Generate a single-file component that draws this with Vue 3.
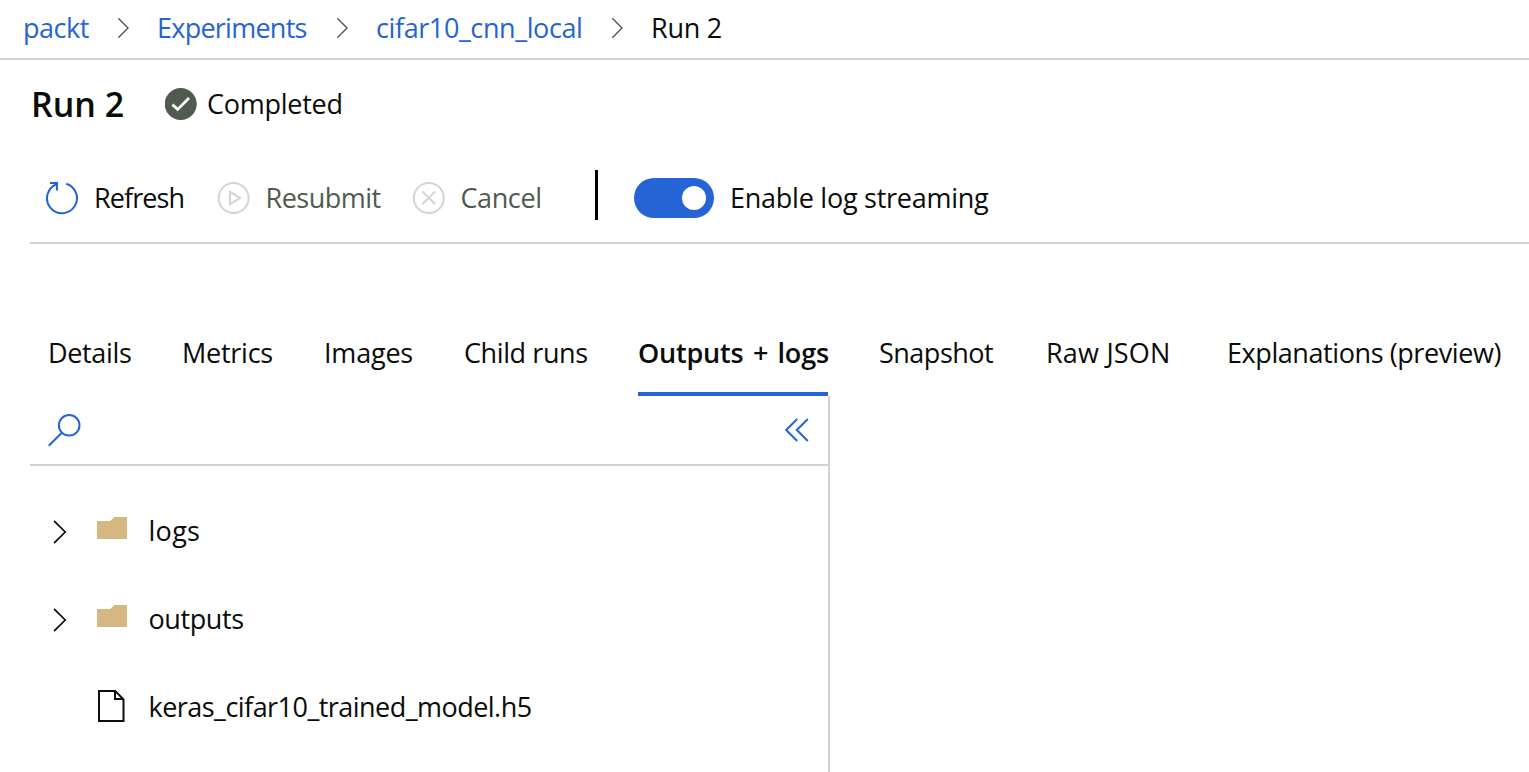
<script setup>
import { ref } from 'vue'

const crumbs = [
  { text: 'packt', cls: 'c-packt' },
  { text: 'Experiments', cls: 'c-exp' },
  { text: 'cifar10_cnn_local', cls: 'c-cifar' },
]

const tabs = [
  { text: 'Details', cls: 't-details' },
  { text: 'Metrics', cls: 't-metrics' },
  { text: 'Images', cls: 't-images' },
  { text: 'Child runs', cls: 't-child' },
  { text: 'Outputs + logs', cls: 't-outputs' },
  { text: 'Snapshot', cls: 't-snapshot' },
  { text: 'Raw JSON', cls: 't-raw' },
  { text: 'Explanations (preview)', cls: 't-expl' },
]

const files = [
  { name: 'logs', folder: true, cls: 'f-logs' },
  { name: 'outputs', folder: true, cls: 'f-outputs' },
  { name: 'keras_cifar10_trained_model.h5', folder: false, cls: 'f-keras' },
]

const active = ref('Outputs + logs')
const streaming = ref(true)
</script>

<template>
  <div class="page">
    <nav class="crumbs">
      <template v-for="c in crumbs" :key="c.text">
        <a class="crumb" :class="c.cls">{{ c.text }}</a>
        <svg class="sep" width="14" height="22" viewBox="0 0 14 22">
          <path d="M1.3 1.2 L11 11 L1.3 20.8" fill="none" stroke="#505a50" stroke-width="1.4" />
        </svg>
      </template>
      <span class="crumb here">Run 2</span>
    </nav>

    <header class="title">
      <h1>Run 2</h1>
      <svg width="32" height="32" viewBox="0 0 32 32">
        <circle cx="15.7" cy="16" r="16" fill="#505a50" />
        <path d="M7.4 16.6 L12.7 21.4 L24 10" fill="none" stroke="#fff" stroke-width="2.8" />
      </svg>
      <span class="status">Completed</span>
    </header>

    <div class="toolbar">
      <button class="tool refresh">
        <svg width="34" height="34" viewBox="0 0 34 34" fill="none" stroke="#2564d4" stroke-width="2">
          <path d="M21.2 2.8 A15 15 0 1 1 11.6 3.2" />
          <path d="M5 2 H12 V9.4" />
        </svg>
        <span>Refresh</span>
      </button>
      <button class="tool resubmit" disabled>
        <svg width="34" height="34" viewBox="0 0 34 34" fill="none" stroke="#d2d4d6" stroke-width="2">
          <circle cx="16.6" cy="17" r="15" />
          <path d="M13 10.8 V23.2 L23 17 Z" />
        </svg>
        <span>Resubmit</span>
      </button>
      <button class="tool cancel" disabled>
        <svg width="34" height="34" viewBox="0 0 34 34" fill="none" stroke="#d2d4d6" stroke-width="2">
          <circle cx="16.8" cy="17" r="15" />
          <path d="M10.4 10.4 L23.2 23.2 M23.2 10.4 L10.4 23.2" />
        </svg>
        <span>Cancel</span>
      </button>
      <div class="divider"></div>
      <button class="switch" :class="{ on: streaming }" @click="streaming = !streaming"><i></i></button>
      <span class="switch-label">Enable log streaming</span>
    </div>

    <div class="tabs">
      <div
        v-for="t in tabs"
        :key="t.text"
        class="tab"
        :class="[t.cls, { active: active === t.text }]"
        @click="active = t.text"
      >{{ t.text }}</div>
    </div>

    <aside class="panel">
      <div class="search">
        <svg width="34" height="34" viewBox="0 0 34 34" fill="none" stroke="#2564d4" stroke-width="2">
          <circle cx="22.2" cy="12.3" r="10.3" />
          <path d="M14.8 19.7 L1.8 32.7" />
        </svg>
        <svg width="26" height="24" viewBox="0 0 26 24" fill="none" stroke="#2564d4" stroke-width="2">
          <path d="M13.2 1 L2.2 12 L13.2 23 M23.8 1 L12.8 12 L23.8 23" />
        </svg>
      </div>
      <div v-for="f in files" :key="f.name" class="row">
        <span class="twist">
          <svg v-if="f.folder" width="14" height="24" viewBox="0 0 14 24">
            <path d="M1 .9 L12.2 12 L1 23.1" fill="none" stroke="#0a0f0c" stroke-width="1.7" />
          </svg>
        </span>
        <span class="kind">
          <svg v-if="f.folder" class="folder" width="30" height="22" viewBox="0 0 30 22">
            <path d="M0 4 H13.2 L17.2 0 H30 V22 H0 Z" fill="#d7b781" />
          </svg>
          <svg v-else class="doc" width="28" height="32" viewBox="0 0 28 32" fill="none" stroke="#0a0f0c" stroke-width="2">
            <path d="M2 1 H18.2 L26.5 9.3 V31 H2 Z M18 1 V9 H26" />
          </svg>
        </span>
        <span class="name" :class="f.cls">{{ f.name }}</span>
      </div>
    </aside>
  </div>
</template>

<style>
body {
  background: #fff;
}
</style>

<style scoped>
.page {
  width: 1529px;
  height: 772px;
  display: flex;
  flex-direction: column;
  overflow: hidden;
  font-family: 'Open Sans', 'Noto Sans', sans-serif;
  font-size: 27px;
  line-height: 38px;
  color: #0a0c0a;
  white-space: nowrap;
}
button {
  font: inherit;
  color: inherit;
  background: none;
  border: 0;
  padding: 0;
  margin: 0;
}
svg {
  flex: none;
  display: block;
}
.crumbs {
  box-sizing: border-box;
  height: 60px;
  flex: none;
  padding: 0 0 2px 23px;
  border-bottom: 2px solid #d2d2d2;
  display: flex;
  align-items: center;
}
.crumb {
  flex: none;
  color: #2564d4;
}
.c-packt { width: 94px; letter-spacing: -0.5px; }
.c-exp { width: 179px; margin-left: 26px; letter-spacing: -0.75px; }
.c-cifar { width: 235px; margin-left: 26px; letter-spacing: -0.4px; }
.crumb.here { color: #0a0c0a; margin-left: 26px; letter-spacing: -0.25px; }
.title {
  height: 88px;
  flex: none;
  display: flex;
  align-items: center;
  padding-left: 31px;
}
h1 {
  margin: 0;
  width: 134px;
  font-size: 34px;
  line-height: 46px;
  font-weight: 600;
  padding-bottom: 1px;
}
.status {
  margin-left: 10px;
  letter-spacing: -0.25px;
}
.toolbar {
  box-sizing: border-box;
  height: 96px;
  flex: none;
  margin-left: 30px;
  border-bottom: 2px solid #d2d2d2;
  display: flex;
  align-items: center;
  padding-left: 15px;
}
.tool {
  flex: none;
  display: flex;
  align-items: center;
  gap: 15px;
  margin-top: 6px;
}
.tool:disabled { color: #505a50; }
.refresh { width: 171.5px; letter-spacing: -0.9px; }
.resubmit { width: 195px; letter-spacing: -0.5px; }
.cancel { width: 183.5px; letter-spacing: -0.4px; }
.divider {
  width: 3px;
  height: 50px;
  background: #000;
}
.switch {
  box-sizing: border-box;
  width: 80px;
  height: 40px;
  margin: 6px 0 0 36px;
  padding: 8px;
  border-radius: 20px;
  background: #8a8a8a;
  display: flex;
}
.switch.on {
  background: #2564d4;
  justify-content: flex-end;
}
.switch i {
  width: 24px;
  height: 24px;
  border-radius: 50%;
  background: #fff;
}
.switch-label {
  margin: 6px 0 0 16px;
  letter-spacing: -0.25px;
}
.tabs {
  height: 86px;
  margin-top: 66px;
  flex: none;
  display: flex;
  padding-left: 48px;
}
.tab {
  box-sizing: border-box;
  flex: none;
  height: 86px;
  padding-top: 24px;
}
.t-details { width: 134px; letter-spacing: -0.35px; }
.t-metrics { width: 142px; letter-spacing: -0.25px; }
.t-images { width: 140px; letter-spacing: -0.2px; }
.t-child { width: 174px; letter-spacing: -0.4px; }
.t-outputs { width: 190px; letter-spacing: -0.2px; word-spacing: 2.6px; }
.t-snapshot { width: 167px; margin-left: 51px; letter-spacing: -0.5px; }
.t-raw { width: 181px; letter-spacing: 0.2px; }
.t-expl { letter-spacing: -0.42px; }
.tab.active {
  font-weight: 600;
  border-bottom: 4px solid #2564d4;
}
.panel {
  box-sizing: border-box;
  width: 800px;
  flex: 1;
  margin-left: 30px;
  border-right: 2px solid #d2d2d2;
}
.search {
  box-sizing: border-box;
  height: 70px;
  margin-bottom: 21px;
  border-bottom: 2px solid #d2d2d2;
  display: flex;
  align-items: center;
  justify-content: space-between;
  padding: 0 18px 0 17px;
}
.row {
  height: 88px;
  display: flex;
  align-items: center;
}
.twist {
  box-sizing: border-box;
  width: 67px;
  padding: 2px 0 0 23px;
}
.kind {
  width: 51.5px;
}
.folder { margin-top: -6px; }
.doc { margin-top: -2px; }
.f-logs { letter-spacing: 0.3px; }
.f-outputs { letter-spacing: -0.4px; }
.f-keras { letter-spacing: -0.53px; }
</style>
